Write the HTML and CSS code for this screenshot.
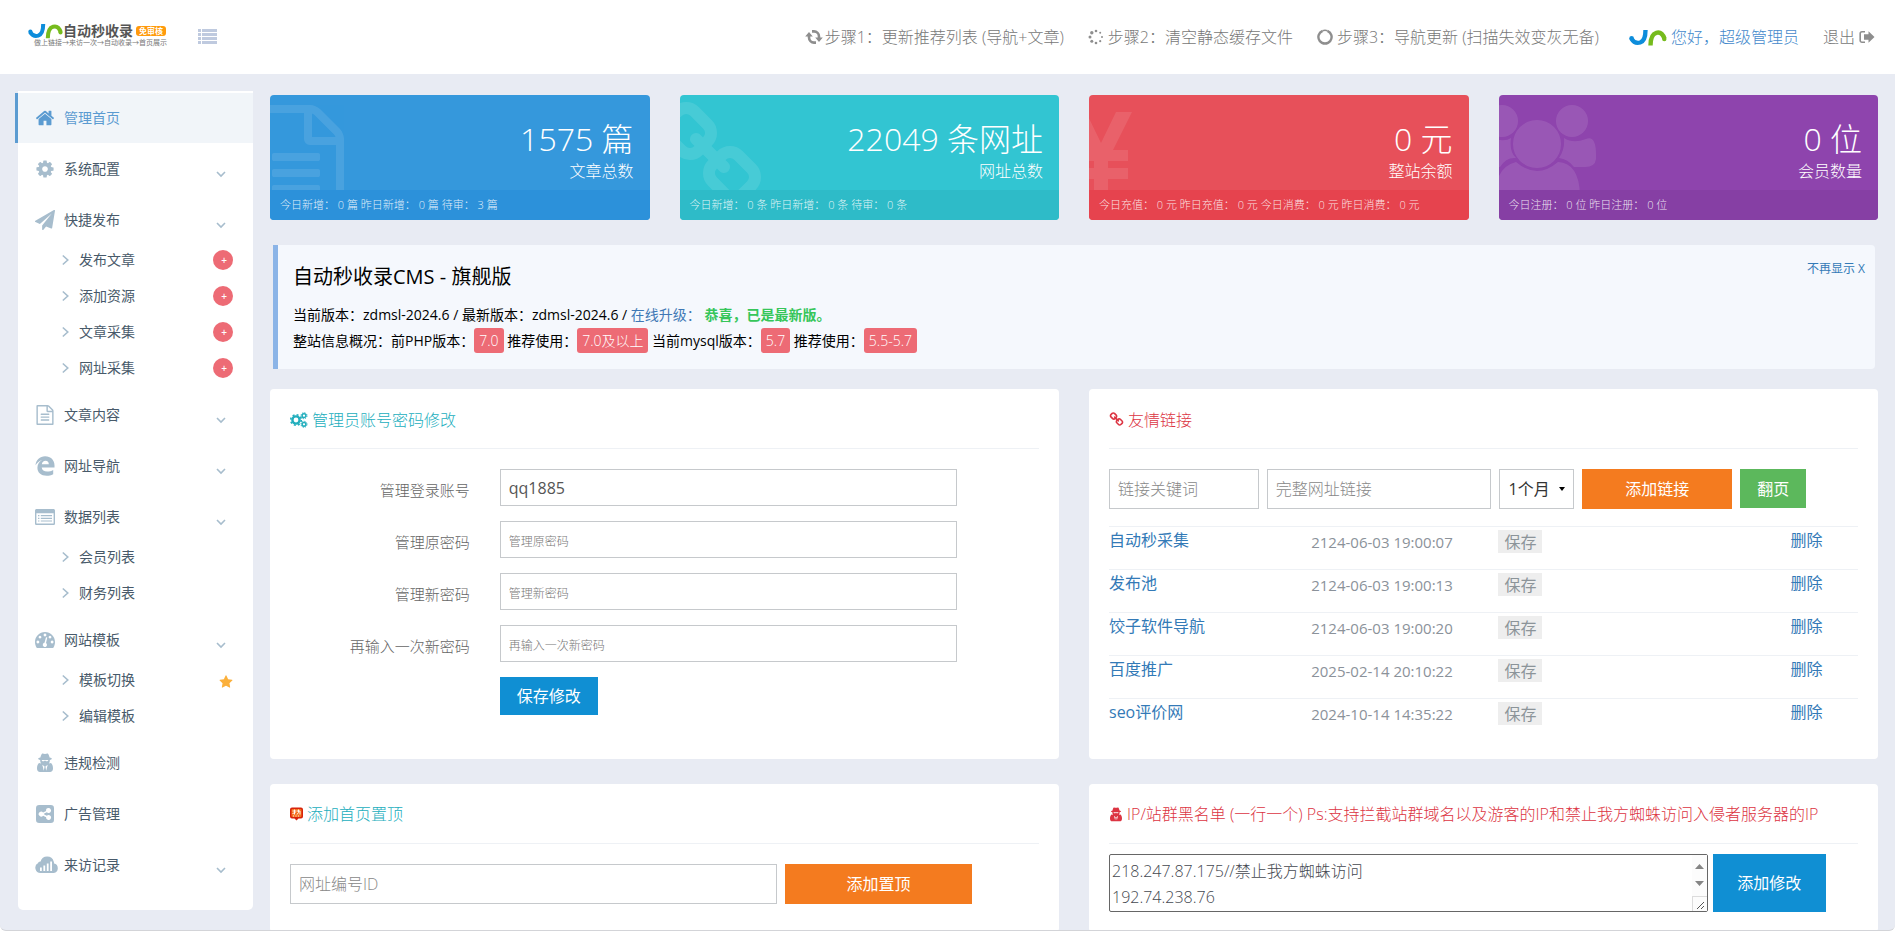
FILE: index.html
```html
<!DOCTYPE html>
<html lang="zh-CN">
<head>
<meta charset="utf-8">
<title>自动秒收录CMS</title>
<link rel="stylesheet" href="styles.css">
</head>
<body>
<svg class="defs" aria-hidden="true">
  <symbol id="i-home" viewBox="0 0 1792 1792"><path d="M1472 992v480q0 26-19 45t-45 19h-384v-384h-256v384h-384q-26 0-45-19t-19-45v-480q0-1 .5-3t.5-3l575-474 575 474q1 2 1 6zm223-69l-62 74q-8 9-21 11h-3q-13 0-21-7l-692-577-692 577q-12 8-24 7-13-2-21-11l-62-74q-8-10-7-23.5t11-21.5l719-599q32-26 76-26t76 26l244 204v-195q0-14 9-23t23-9h192q14 0 23 9t9 23v408l219 182q10 8 11 21.5t-7 23.5z"/></symbol>
  <symbol id="i-cog" viewBox="0 0 1792 1792"><path d="M1152 896q0-106-75-181t-181-75-181 75-75 181 75 181 181 75 181-75 75-181zm512-109v222q0 12-8 23t-20 13l-185 28q-19 54-39 91 35 50 107 138 10 12 10 25t-9 23q-27 37-99 108t-94 71q-12 0-26-9l-138-108q-44 23-91 38-16 136-29 186-7 28-36 28h-222q-14 0-24.5-8.5t-11.5-21.5l-28-184q-49-16-90-37l-141 107q-10 9-25 9-14 0-25-11-126-114-165-168-7-10-7-23 0-12 8-23 15-21 51-66.5t54-70.5q-27-50-41-99l-183-27q-13-2-21-12.5t-8-23.5v-222q0-12 8-23t19-13l186-28q14-46 39-92-40-57-107-138-10-12-10-24 0-10 9-23 26-36 98.5-107.5t94.5-71.5q13 0 26 10l138 107q44-23 91-38 16-136 29-186 7-28 36-28h222q14 0 24.5 8.5t11.5 21.5l28 184q49 16 90 37l142-107q9-9 24-9 13 0 25 10 129 119 165 170 7 8 7 22 0 12-8 23-15 21-51 66.5t-54 70.5q26 50 41 98l183 28q13 2 21 12.5t8 23.5z"/></symbol>
  <symbol id="i-plane" viewBox="0 0 1792 1792"><path d="M1764 11q33 24 27 64l-256 1536q-5 29-32 45-14 8-31 8-11 0-24-5l-453-185-242 295q-18 23-49 23-13 0-22-4-19-7-30.5-23.5t-11.5-36.5v-349l864-1059-1069 925-395-162q-37-14-40-55-2-40 32-59l1664-960q15-9 32-9 20 0 36 11z"/></symbol>
  <symbol id="i-file" viewBox="0 0 1792 1792"><path d="M1596 380q28 28 48 76t20 88v1152q0 40-28 68t-68 28h-1344q-40 0-68-28t-28-68v-1600q0-40 28-68t68-28h896q40 0 88 20t76 48zm-444-244v376h376q-10-29-22-41l-313-313q-12-12-41-22zm384 1528v-1024h-416q-40 0-68-28t-28-68v-416h-768v1536h1280zm-1024-864q0-14 9-23t23-9h704q14 0 23 9t9 23v64q0 14-9 23t-23 9h-704q-14 0-23-9t-9-23v-64zm736 224q14 0 23 9t9 23v64q0 14-9 23t-23 9h-704q-14 0-23-9t-9-23v-64q0-14 9-23t23-9h704zm0 256q14 0 23 9t9 23v64q0 14-9 23t-23 9h-704q-14 0-23-9t-9-23v-64q0-14 9-23t23-9h704z"/></symbol>
  <symbol id="i-link" viewBox="0 0 1792 1792"><path d="M1520 1216q0-40-28-68l-208-208q-28-28-68-28-42 0-72 32 3 3 19 18.5t21.5 21.5 15 19 13 25.5 3.5 27.5q0 40-28 68t-68 28q-15 0-27.5-3.5t-25.5-13-19-15-21.5-21.5-18.5-19q-33 31-33 73 0 40 28 68l206 207q27 27 68 27 40 0 68-26l147-146q28-28 28-67zm-703-705q0-40-28-68l-206-207q-28-28-68-28-39 0-68 27l-147 146q-28 28-28 67 0 40 28 68l208 208q27 27 68 27 42 0 72-31-3-3-19-18.5t-21.5-21.5-15-19-13-25.5-3.5-27.5q0-40 28-68t68-28q15 0 27.5 3.5t25.5 13 19 15 21.5 21.5 18.5 19q33-31 33-73zm895 705q0 120-85 203l-147 146q-83 83-203 83-121 0-204-85l-206-207q-83-83-83-203 0-123 88-209l-88-88q-86 88-208 88-120 0-204-84l-208-208q-84-84-84-204t85-203l147-146q83-83 203-83 121 0 204 85l206 207q83 83 83 203 0 123-88 209l88 88q86-88 208-88 120 0 204 84l208 208q84 84 84 204z"/></symbol>
  <symbol id="i-star" viewBox="0 0 1792 1792"><path d="M1728 647q0 22-26 48l-363 354 86 500q1 7 1 20 0 21-10.5 35.5t-30.5 14.5q-19 0-40-12l-449-236-449 236q-22 12-40 12-21 0-31.5-14.5t-10.5-35.5q0-6 2-20l86-500-364-354q-25-27-25-48 0-37 56-46l502-73 225-455q19-41 49-41t49 41l225 455 502 73q56 9 56 46z"/></symbol>
  <symbol id="i-edge" viewBox="0 0 20 20"><path d="M.500 9.300C1.100 3.900 4.900.300 10.100.300c5.700 0 9.400 3.900 9.400 8.900v2.400H6.700c.2 2.800 2.500 4 5.400 4 2.200 0 4.300-.6 6.100-1.700v4.300c-2 1.100-4.300 1.600-6.500 1.600-5.600 0-9.300-3.100-9.300-8 0-3.700 2-6.400 4.800-7.800C4.500 4.800 2.100 6.500.500 9.300zM6.800 8.200h7c0-2.200-1.100-3.400-3.300-3.400-2 0-3.300 1.300-3.700 3.400z"/></symbol>
  <symbol id="i-listalt" viewBox="0 0 20 20"><path fill-rule="evenodd" d="M1.600 2h16.800c.9 0 1.600.7 1.600 1.600v12.800c0 .9-.7 1.600-1.600 1.600H1.600C.700 18 0 17.300 0 16.400V3.600C0 2.700.700 2 1.600 2zM1.400 6.200v10.400h17.200V6.200zM3 8h1.400v1.200H3zm0 2.700h1.400v1.200H3zm0 2.700h1.400v1.200H3zM5.800 8H17v1.200H5.800zm0 2.700H17v1.200H5.800zm0 2.700H17v1.200H5.800z"/></symbol>
  <symbol id="i-dash" viewBox="0 0 20 20"><path fill-rule="evenodd" d="M10 2c5.600 0 10 4.500 10 10 0 2-.5 3.800-1.500 5.400-.2.400-.6.600-1 .6h-15c-.4 0-.8-.2-1-.6C.500 15.800 0 14 0 12 0 6.500 4.400 2 10 2zM2.900 10.600a1.400 1.400 0 1 0 .001 0zM5 5.700a1.400 1.400 0 1 0 .001 0zM10 3.600a1.400 1.400 0 1 0 .001 0zM15 5.700a1.400 1.400 0 1 0 .001 0zM17.100 10.600a1.400 1.400 0 1 0 .001 0zM11 7.200l-1.500 5.600a2.100 2.100 0 1 0 1.500.3l1.300-5.500z"/></symbol>
  <symbol id="i-spy" viewBox="1 0 18 20"><path fill-rule="evenodd" d="M7 .8c.8-.6 1.700.3 3 .3s2.200-.9 3-.3c.8.700 1.300 2.400 1.600 3.800 1.400.3 2.200.7 2.200 1.100 0 .5-.8.900-2 1.200.1 1.500-.2 2.700-1 3.500l2.200-.5c1.300 1.200 2 3 2 5.600 0 2.200-1.200 3.500-3 3.500H5c-1.800 0-3-1.300-3-3.500 0-2.600.7-4.400 2-5.600l2.200.5c-.8-.8-1.100-2-1-3.500-1.200-.3-2-.7-2-1.200 0-.4.800-.8 2.200-1.100C5.700 3.200 6.200 1.500 7 .8zM6.600 7c.3 1 .8 1.300 1.600 1.300S9.500 7.800 10 7.500c.5.300 1 .800 1.800.8s1.300-.3 1.600-1.300zM7.300 11.700l1.500 6 .8-4.200zM12.700 11.700l-2.300 1.800.8 4.200z"/></symbol>
  <symbol id="i-share" viewBox="0 0 20 20"><path fill-rule="evenodd" d="M4.200 1h11.600A3.200 3.200 0 0 1 19 4.200v11.600a3.200 3.200 0 0 1-3.200 3.200H4.200A3.200 3.200 0 0 1 1 15.800V4.200A3.200 3.200 0 0 1 4.200 1zM13.600 4a2.500 2.500 0 0 0-2.500 2.900L8.100 8.400a2.500 2.500 0 1 0 0 3.300l3 1.500a2.500 2.500 0 1 0 .7-1.500L8.900 10.300v-.6l2.900-1.400A2.500 2.500 0 1 0 13.600 4z"/></symbol>
  <symbol id="i-cloud" viewBox="0 0 24 20"><path fill-rule="evenodd" d="M5.500 18A5.300 5.300 0 0 1 3.200 8c0-.7.8-1.700 2.400-1.600A6.800 6.800 0 0 1 18.700 6.500c.3.800.4 1.300.4 2.100A4.800 4.800 0 0 1 18.800 18zM5 12.500v3.500h1.800v-3.500zM8.400 10.500V16h1.800v-5.500zM11.800 8.500V16h1.800V8.500zM15.200 6.500V16H17V6.500z"/></symbol>
  <symbol id="i-right" viewBox="0 0 10 12"><path d="M2 1l5.500 5L2 11" fill="none" stroke="currentColor" stroke-width="1.800"/></symbol>
  <symbol id="i-down" viewBox="0 0 12 8"><path d="M2 2l4 4 4-4" fill="none" stroke="currentColor" stroke-width="1.600"/></symbol>
  <symbol id="i-cogs" viewBox="0 0 18 16"><g fill="none" stroke="currentColor"><circle cx="6" cy="8" r="3.600" stroke-width="2.400"/><circle cx="6" cy="8" r="5.300" stroke-width="1.600" stroke-dasharray="2 2.160"/><circle cx="14" cy="3.700" r="1.900" stroke-width="1.500"/><circle cx="14" cy="3.700" r="3" stroke-width="1" stroke-dasharray="1.300 1.050"/><circle cx="14" cy="12.300" r="1.900" stroke-width="1.500"/><circle cx="14" cy="12.300" r="3" stroke-width="1" stroke-dasharray="1.300 1.050"/></g></symbol>
  <symbol id="i-refresh" viewBox="0 0 18 16"><g fill="none" stroke="currentColor" stroke-width="2.600"><path d="M7 2.400h2a5 5 0 0 1 5 5V9"/><path d="M11 13.600H9a5 5 0 0 1-5-5V7"/></g><path d="M10.200 8.600h7.600L14 13zM.2 7.400h7.600L4 3z"/></symbol>
  <symbol id="i-spin" viewBox="0 0 16 16"><circle cx="8" cy="2" r="1.300"/><circle cx="12.200" cy="3.800" r="1"/><circle cx="14" cy="8" r="1"/><circle cx="12.200" cy="12.200" r="1.100"/><circle cx="8" cy="14" r="1.300"/><circle cx="3.800" cy="12.200" r="1.500"/><circle cx="2" cy="8" r="1.500"/><circle cx="3.800" cy="3.800" r="1.700"/></symbol>
  <symbol id="i-ring" viewBox="0 0 16 16"><path d="M5.600 1.800A6.600 6.600 0 1 0 10.400 1.800" fill="none" stroke="currentColor" stroke-width="2.400"/><path d="M5.600 1.800Q8 .8 10.400 1.800" fill="none" stroke="currentColor" stroke-width="1.500"/></symbol>
  <symbol id="i-out" viewBox="0 0 16 14"><path d="M6 1.700H3A1.800 1.800 0 0 0 1.200 3.500v7A1.800 1.800 0 0 0 3 12.300h3" fill="none" stroke="currentColor" stroke-width="1.600"/><path d="M9.500 1.200l6 5.800-6 5.800V9.700H5V4.300h4.500z"/></symbol>
  <symbol id="i-logo" viewBox="0 0 38 17"><path d="M2.300 9.500c2.200 3.800 5.500 5 8.900 4C15 12.300 16.500 8 16.500 1" fill="none" stroke="#0d8ddb" stroke-width="4.400"/><circle cx="2.600" cy="9.200" r="2.300" fill="#0d8ddb"/><path d="M21.500 16.500c0-7 1.500-11.500 5.800-12.700 4-1 6.700 1.400 8.200 6" fill="none" stroke="#76bb1d" stroke-width="4.400"/><circle cx="35.300" cy="10" r="2.200" fill="#76bb1d"/></symbol>
</svg>

<div class="frame">
  <header class="topbar">
    <a class="brand" href="#">
      <svg class="brand-mark"><use href="#i-logo"/></svg>
      <span class="brand-line"><b class="brand-name">自动秒收录</b><span class="brand-tag">免审核</span></span>
      <span class="brand-sub">做上链接→来访一次→自动收录→首页展示</span>
    </a>
    <button class="toggler" type="button" aria-label="菜单">
      <svg viewBox="0 0 19 16"><path d="M0 0h3v3H0zM4 0h15v3H4zM0 4h3v3H0zM4 4h15v3H4zM0 8h3v3H0zM4 8h15v3H4zM0 12h3v3H0zM4 12h15v3H4z"/></svg>
    </button>
    <nav class="steps">
      <a href="#"><svg class="ic18"><use href="#i-refresh"/></svg>步骤1：更新推荐列表 (导航+文章)</a>
      <a href="#" class="spaced"><svg class="ic16"><use href="#i-spin"/></svg>步骤2：清空静态缓存文件</a>
      <a href="#" class="spaced"><svg class="ic16"><use href="#i-ring"/></svg>步骤3：导航更新 (扫描失效变灰无备)</a>
      <a href="#" class="spaced user"><svg class="user-logo"><use href="#i-logo"/></svg>您好，超级管理员</a>
      <a href="#" class="spaced">退出<svg class="ic16"><use href="#i-out"/></svg></a>
    </nav>
  </header>

  <div class="body">
    <aside class="sidebar">
      <ul class="menu">
        <li><a class="item active" href="#"><svg><use href="#i-home"/></svg>管理首页</a></li>
        <li><a class="item" href="#"><svg><use href="#i-cog"/></svg>系统配置<svg class="down"><use href="#i-down"/></svg></a></li>
        <li><a class="item" href="#"><svg><use href="#i-plane"/></svg>快捷发布<svg class="down"><use href="#i-down"/></svg></a>
          <ul class="sub">
            <li><a href="#"><svg><use href="#i-right"/></svg>发布文章<span class="plus">+</span></a></li>
            <li><a href="#"><svg><use href="#i-right"/></svg>添加资源<span class="plus">+</span></a></li>
            <li><a href="#"><svg><use href="#i-right"/></svg>文章采集<span class="plus">+</span></a></li>
            <li><a href="#"><svg><use href="#i-right"/></svg>网址采集<span class="plus">+</span></a></li>
          </ul></li>
        <li><a class="item" href="#"><svg><use href="#i-file"/></svg>文章内容<svg class="down"><use href="#i-down"/></svg></a></li>
        <li><a class="item" href="#"><svg><use href="#i-edge"/></svg>网址导航<svg class="down"><use href="#i-down"/></svg></a></li>
        <li><a class="item" href="#"><svg><use href="#i-listalt"/></svg>数据列表<svg class="down"><use href="#i-down"/></svg></a>
          <ul class="sub">
            <li><a href="#"><svg><use href="#i-right"/></svg>会员列表</a></li>
            <li><a href="#"><svg><use href="#i-right"/></svg>财务列表</a></li>
          </ul></li>
        <li><a class="item" href="#"><svg><use href="#i-dash"/></svg>网站模板<svg class="down"><use href="#i-down"/></svg></a>
          <ul class="sub">
            <li><a href="#"><svg><use href="#i-right"/></svg>模板切换<svg class="star"><use href="#i-star"/></svg></a></li>
            <li><a href="#"><svg><use href="#i-right"/></svg>编辑模板</a></li>
          </ul></li>
        <li><a class="item" href="#"><svg><use href="#i-spy"/></svg>违规检测</a></li>
        <li><a class="item" href="#"><svg><use href="#i-share"/></svg>广告管理</a></li>
        <li><a class="item" href="#"><svg class="wide"><use href="#i-cloud"/></svg>来访记录<svg class="down"><use href="#i-down"/></svg></a></li>
      </ul>
    </aside>

    <main class="main">
      <section class="stats">
        <article class="stat blue"><svg class="ghost"><use href="#i-file"/></svg>
          <div class="stat-body"><strong>1575 篇</strong><span>文章总数</span></div>
          <p>今日新增： 0 篇 昨日新增： 0 篇 待审： 3 篇</p></article>
        <article class="stat teal"><svg class="ghost"><use href="#i-link"/></svg>
          <div class="stat-body"><strong>22049 条网址</strong><span>网址总数</span></div>
          <p>今日新增： 0 条 昨日新增： 0 条 待审： 0 条</p></article>
        <article class="stat red"><svg class="ghost" viewBox="0 0 112 112"><path d="M11 7h16l15 31L57 7h16L54 45h15v11H49v7h20v11H49v22H35V74H15V63h20v-7H15V45h15z"/></svg>
          <div class="stat-body"><strong>0 元</strong><span>整站余额</span></div>
          <p>今日充值： 0 元 昨日充值： 0 元 今日消费： 0 元 昨日消费： 0 元</p></article>
        <article class="stat purple"><svg class="ghost" viewBox="-30 10 112 112"><circle cx="3" cy="26" r="16"/><circle cx="73" cy="26" r="16"/><circle cx="38" cy="49" r="24"/><path d="M1 45Q8 46 12 43q-2 14 5 20Q7 62 1 72h-9q-11-2-11-12 0-12 7-17 7 2 13 2zM65 43q9 6 22 1 10-4 10 16v4q-1 8-11 8H75q-6-8-15-9 6-8 5-20z"/><path d="M17 67q21 18 42 0 21 1 22 33 0 17-12 17H8Q-4 117-4 100q1-28 21-33z"/></svg>
          <div class="stat-body"><strong>0 位</strong><span>会员数量</span></div>
          <p>今日注册： 0 位 昨日注册： 0 位</p></article>
      </section>

      <section class="notice">
        <a class="dismiss" href="#">不再显示 X</a>
        <h1>自动秒收录<b>CMS - </b>旗舰版</h1>
        <p>当前版本：zdmsl-2024.6 / 最新版本：zdmsl-2024.6 / <a href="#">在线升级：</a> <b class="ok">恭喜，已是最新版。</b></p>
        <p>整站信息概况：前PHP版本：<span class="tag">7.0</span> 推荐使用：<span class="tag">7.0及以上</span> 当前mysql版本：<span class="tag">5.7</span> 推荐使用：<span class="tag">5.5-5.7</span></p>
      </section>

      <div class="panels">
        <section class="panel">
          <h2 class="teal-text"><svg class="ic18"><use href="#i-cogs"/></svg>管理员账号密码修改</h2>
          <form class="account">
            <label for="u">管理登录账号</label><input id="u" type="text" value="qq1885">
            <label for="p0">管理原密码</label><input id="p0" type="password" placeholder="管理原密码">
            <label for="p1">管理新密码</label><input id="p1" type="password" placeholder="管理新密码">
            <label for="p2">再输入一次新密码</label><input id="p2" type="password" placeholder="再输入一次新密码">
            <button class="btn primary" type="button">保存修改</button>
          </form>
        </section>

        <section class="panel">
          <h2 class="red-text"><svg class="ic15"><use href="#i-link"/></svg>友情链接</h2>
          <form class="inline">
            <input class="w-key" type="text" placeholder="链接关键词" aria-label="链接关键词">
            <input class="w-url" type="text" placeholder="完整网址链接" aria-label="完整网址链接">
            <span class="select"><select aria-label="时长"><option>1个月</option></select><svg viewBox="0 0 6 4"><path d="M0 0h6L3 4z"/></svg></span>
            <button class="btn orange w-add" type="button">添加链接</button>
            <button class="btn green" type="button">翻页</button>
          </form>
          <table class="links">
            <tr><td class="c-name"><a href="#">自动秒采集</a></td><td class="c-date">2124-06-03 19:00:07</td><td class="c-save"><button type="button">保存</button></td><td><a href="#">删除</a></td></tr>
            <tr><td><a href="#">发布池</a></td><td class="c-date">2124-06-03 19:00:13</td><td><button type="button">保存</button></td><td><a href="#">删除</a></td></tr>
            <tr><td><a href="#">饺子软件导航</a></td><td class="c-date">2124-06-03 19:00:20</td><td><button type="button">保存</button></td><td><a href="#">删除</a></td></tr>
            <tr><td><a href="#">百度推广</a></td><td class="c-date">2025-02-14 20:10:22</td><td><button type="button">保存</button></td><td><a href="#">删除</a></td></tr>
            <tr><td><a href="#">seo评价网</a></td><td class="c-date">2024-10-14 14:35:22</td><td><button type="button">保存</button></td><td><a href="#">删除</a></td></tr>
          </table>
        </section>

        <section class="panel">
          <h2 class="teal-text"><svg class="ic13" viewBox="0 0 13 13"><path d="M2 0h9a2 2 0 0 1 2 2v7a2 2 0 0 1-2 2H8.500l-2 2-2-2H2a2 2 0 0 1-2-2V2a2 2 0 0 1 2-2z" fill="#d8230b"/><rect x="1.500" y="1.500" width="10" height="8" rx="1" fill="#f5721e"/><path d="M2.500 3.500h4M4.500 2v5M2.500 6l3-1M7 3.500h3v3.500M8.500 2v3L7 7M3 8.500h1M5.500 8.500h1M8 8.500h1" stroke="#fff" stroke-width=".9" fill="none"/></svg>添加首页置顶</h2>
          <form class="inline">
            <input class="w-id" type="text" placeholder="网址编号ID" aria-label="网址编号ID">
            <button class="btn orange w-top" type="button">添加置顶</button>
          </form>
        </section>

        <section class="panel">
          <h2 class="red-text"><svg class="ic14"><use href="#i-spy"/></svg>IP/站群黑名单 (一行一个) Ps:支持拦截站群域名以及游客的IP和禁止我方蜘蛛访问入侵者服务器的IP</h2>
          <form class="inline blacklist">
            <span class="area"><textarea aria-label="黑名单">218.247.87.175//禁止我方蜘蛛访问
192.74.238.76</textarea><svg class="scroll" viewBox="0 0 15 56"><path d="M0 0h15v56H0z" fill="#fcfcfc"/><path d="M3 14h9L7.500 9zM3 26h9l-4.500 5z" fill="#858585"/><path d="M0 41.500h15M.500 41v15" stroke="#dcdcdc"/><path d="M5 54l7-7M9 54l3-3" stroke="#555"/></svg></span>
            <button class="btn primary" type="button">添加修改</button>
          </form>
        </section>
      </div>
    </main>
  </div>
</div>
</body>
</html>
```

FILE: styles.css
```css
* { box-sizing: border-box; }
html, body { margin: 0; height: 100%; overflow: hidden; }
body {
  font: 400 14px/20px "Open Sans", "Noto Sans CJK SC", sans-serif;
  color: #333;
  background: #fff;
}
a { color: inherit; text-decoration: none; }
ul { list-style: none; margin: 0; padding: 0; }
h1, h2, p { margin: 0; font-weight: inherit; }
input, button, select, textarea { font: inherit; border-radius: 0; }
svg { fill: currentColor; flex: none; }
.defs { position: absolute; width: 0; height: 0; }

.frame {
  height: calc(100vh - 1px);
  margin-right: 2px;
  overflow: hidden;
  background: #e8ebf3;
  border-bottom: 1px solid #d3d4d8;
  border-radius: 0 0 6px 6px;
}

/* Top bar */
.topbar {
  display: flex;
  align-items: center;
  height: 74px;
  padding: 0 20px 0 28px;
  background: #fff;
}
.brand {
  display: grid;
  grid-template-columns: 35px auto;
  width: 140px;
  margin-top: -4px;
  color: #555;
}
.brand-mark { width: 35px; height: 16px; }
.brand-line { display: flex; align-items: center; gap: 3px; height: 16px; }
.brand-name { font-size: 14px; line-height: 16px; font-weight: 700; white-space: nowrap; }
.brand-tag {
  padding: 0 3px;
  font-size: 8px;
  line-height: 10px;
  font-weight: 700;
  white-space: nowrap;
  color: #fff;
  background: #ff9a0c;
  border-radius: 3px;
}
.brand-sub {
  grid-column: 1 / 3;
  padding-left: 6px;
  font-size: 7px;
  line-height: 8px;
  white-space: nowrap;
  color: #777;
}
.toggler {
  display: flex;
  margin: 0 0 0 30px;
  padding: 0;
  border: 0;
  background: none;
  color: #bfcadf;
}
.toggler svg { width: 19px; height: 16px; }
.steps {
  display: flex;
  align-items: center;
  margin-left: auto;
  font-size: 16px;
  line-height: 24px;
  font-weight: 300;
  color: #777;
  white-space: nowrap;
}
.steps a { display: flex; align-items: center; gap: 2px; }
.steps svg { color: #8e8e8e; }
.steps .spaced { margin-left: 24px; gap: 4px; }
.steps .user { margin-left: 30px; color: #4489cc; }
.user-logo { width: 38px; height: 17px; }
.ic18 { width: 18px; height: 16px; }
.ic16 { width: 16px; height: 16px; }
.ic15 { width: 15px; height: 15px; }
.ic14 { width: 14px; height: 15px; }
.ic13 { width: 13px; height: 14px; }

.body {
  display: flex;
  align-items: flex-start;
  gap: 17px;
  padding: 17px 17px 0 18px;
}

/* Sidebar */
.sidebar {
  flex: none;
  width: 235px;
  padding: 2px 0 20px;
  background: #fff;
  border-radius: 0 0 5px 5px;
  color: #485a6a;
}
.menu > li + li { margin-top: 1px; }
.item {
  display: flex;
  align-items: center;
  gap: 9px;
  height: 50px;
  padding: 0 26px 0 17px;
}
.item svg { width: 20px; height: 20px; color: #a7bdcd; }
.item .wide { width: 24px; margin-right: -4px; }
.item .down { width: 12px; height: 8px; margin: 10px 0 0 auto; }
.item.active {
  margin-left: -3px;
  border-left: 3px solid #5b9bd1;
  background: #f1f5f9;
  color: #5b9bd1;
}
.item.active svg { color: #5b9bd1; }
.sub { margin: -3px 0 4px; }
.sub a {
  display: flex;
  align-items: center;
  gap: 9px;
  height: 36px;
  padding: 0 20px 0 43px;
}
.sub svg { width: 9px; height: 12px; color: #a7bdcd; }
.sub .plus {
  width: 20px;
  height: 20px;
  margin-left: auto;
  padding-left: 2px;
  border-radius: 10px;
  background: #ed6b75;
  color: #fff;
  font-size: 10px;
  line-height: 20px;
  font-weight: 600;
  text-align: center;
}
.sub .star { width: 14px; height: 14px; margin: 3px 0 0 auto; color: #fbb03b; }

/* Stats */
.main { flex: 1; min-width: 0; padding-top: 4px; }
.stats { display: grid; grid-template-columns: repeat(4, 1fr); gap: 30px; }
.stat {
  position: relative;
  overflow: hidden;
  border-radius: 4px;
  color: #fff;
}
.stat-body {
  display: flex;
  flex-direction: column;
  align-items: flex-end;
  height: 95px;
  padding: 22px 16px 0;
}
.stat strong { font-size: 32px; line-height: 43px; font-weight: 300; }
.stat span { font-size: 16px; line-height: 22px; font-weight: 300; }
.stat p {
  position: relative;
  padding: 0 10px;
  height: 30px;
  font-size: 11px;
  line-height: 30px;
  font-weight: 300;
  color: rgba(255, 255, 255, .85);
  white-space: nowrap;
}
.ghost {
  position: absolute;
  left: -30px;
  top: 10px;
  width: 112px;
  height: 112px;
  overflow: visible;
  opacity: .1;
}
.teal .ghost { left: -26px; top: 6px; }
.blue { background: #3598dc; }
.blue p { background: #2c91da; }
.teal { background: #32c5d2; }
.teal p { background: #2ebbc8; }
.red { background: #e7505a; }
.red p { background: #e6434e; }
.purple { background: #8e44ad; }
.purple p { background: #863fa4; }

/* Notice */
.notice {
  position: relative;
  margin: 25px 3px 20px;
  padding: 20px 15px 15px;
  border-left: 5px solid #8bb4e7;
  border-radius: 0 4px 4px 0;
  background: #f5f8fd;
  color: #000;
}
.notice h1 { margin-bottom: 13px; font-size: 20px; line-height: 24px; }
.notice h1 b { font-weight: 500; }
.notice p { line-height: 26px; white-space: nowrap; }
.notice p a { color: #3f78b5; }
.notice .ok { color: #36c65a; font-weight: 700; }
.tag {
  display: inline-block;
  padding: 0 5px;
  line-height: 25px;
  border-radius: 3px;
  background: #ed6b75;
  color: #fff;
  font-weight: 300;
}
.dismiss { position: absolute; right: 10px; top: 14px; font-size: 12px; color: #337ab7; }

/* Panels */
.panels { display: grid; grid-template-columns: repeat(2, minmax(0, 1fr)); gap: 25px 30px; }
.panel {
  min-height: 148px;
  padding: 12px 20px 17px;
  border-radius: 4px;
  background: #fff;
  font-size: 16px;
}
.panel h2 {
  display: flex;
  align-items: center;
  gap: 4px;
  height: 48px;
  padding-bottom: 10px;
  font-size: 16px;
  font-weight: 300;
  border-bottom: 1px solid #eef1f5;
  white-space: nowrap;
}
.teal-text { color: #22aebd; }
.red-text { color: #dc3442; }
.panel input, .panel select {
  min-width: 0;
  padding: 0 8px;
  border: 1px solid #c6c9cc;
  background: #fff;
  color: #555;
  outline: 0;
}
.panel ::placeholder { color: #888; opacity: 1; font-weight: 300; }

.account {
  display: grid;
  grid-template-columns: 24% 61%;
  gap: 15px 30px;
  align-items: center;
  padding: 20px 0 13px;
}
.account label { padding-top: 5px; text-align: right; font-size: 15px; font-weight: 300; color: #666; }
.account input { height: 37px; }
.account ::placeholder { font-size: 12px; color: #777; }
.account .btn { grid-column: 2; justify-self: start; height: 38px; width: 98px; }

.inline { display: flex; gap: 8px; padding-top: 20px; }
.inline input, .select { height: 40px; }
.btn { border: 0; padding: 0; color: #fff; font-size: 16px; }
.primary { background: #108fd3; }
.orange { background: #f47b1f; }
.green { width: 66px; height: 39px; background: #5cb85c; }
.w-key { width: 20%; }
.w-url { width: 30%; }
.w-add { width: 20%; }
.w-id { width: 65%; }
.w-top { width: 25%; }
.select { position: relative; width: 10%; }
.panel .select select { width: 100%; height: 100%; appearance: none; color: #333; }
.select svg { position: absolute; right: 9px; top: 18px; width: 6px; height: 4px; fill: #000; }

.links { width: 100%; margin-top: 17px; border-collapse: collapse; table-layout: fixed; }
.links td { height: 43px; padding: 3px 0 0; border-top: 1px solid #eef1f5; vertical-align: top; }
.links a { color: #337ab7; }
.c-name { width: 27%; }
.c-save { width: 39%; }
.links .c-date { width: 25%; padding-top: 5px; font-size: 15px; color: #8b929a; }
.links button {
  width: 44px;
  height: 23px;
  padding: 0;
  border: 0;
  background: #eee;
  color: #8c9499;
  font-size: 16px;
  line-height: 20px;
}

.blacklist { gap: 5px; padding-top: 10px; }
.area { position: relative; flex: none; width: 80%; height: 58px; }
.blacklist textarea {
  display: block;
  width: 100%;
  height: 100%;
  padding: 3px 2px;
  line-height: 26px;
  font-weight: 300;
  color: #444850;
  border: 1px solid #666;
  border-radius: 2px;
  overflow: hidden;
  resize: none;
  background: #fff;
}
.scroll { position: absolute; right: 1px; top: 1px; width: 15px; height: 56px; }
.blacklist .btn { width: 15%; height: 58px; }
```
